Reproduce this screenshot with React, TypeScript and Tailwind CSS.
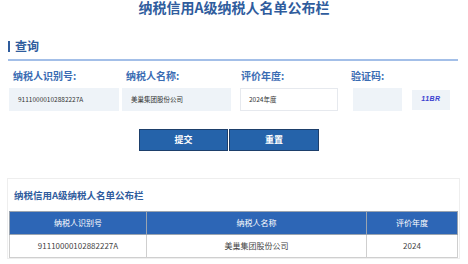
const font = { fontFamily: '"Noto Sans CJK SC", "Liberation Sans", sans-serif' };

function Field({
  label,
  value,
  className,
  labelClass,
  boxClass,
}: {
  label: string;
  value: string;
  className: string;
  labelClass: string;
  boxClass: string;
}) {
  return (
    <div className={`flex flex-col ${className}`}>
      <div className={`h-[12px] text-[10px] leading-[12px] font-bold text-[#3a6cb3] ${labelClass}`}>{label}</div>
      <div className={`mt-[6px] h-[23px] flex items-center text-[6.5px] text-[#333] ${boxClass}`}>{value}</div>
    </div>
  );
}

export default function App() {
  return (
    <div className="w-[468px] h-[264px] overflow-hidden bg-white" style={font}>
      {/* page title */}
      <div className="h-[14px] text-center text-[14px] leading-[14px] font-bold text-[#2f5c9d]">
        纳税信用A级纳税人名单公布栏
      </div>

      {/* query section header */}
      <div className="mt-[24px] ml-[8px] w-[450px] h-[23px] flex items-start border-b-2 border-[#a3bfe8]">
        <div className="mt-[3px] w-[2px] h-[11px] bg-[#2f5c9d]" />
        <div className="ml-[5px] text-[12px] leading-[16px] font-bold text-[#2f5c9d]">查询</div>
      </div>

      {/* form row */}
      <div className="mt-[9px] flex">
        <Field
          label="纳税人识别号:"
          value="91110000102882227A"
          className="ml-[9px] w-[110px]"
          labelClass="pl-[4px]"
          boxClass="bg-[#eef3f8] pl-[9px]"
        />
        <Field
          label="纳税人名称:"
          value="美巢集团股份公司"
          className="ml-[3px] w-[109px]"
          labelClass="pl-[4px]"
          boxClass="bg-[#eef3f8] pl-[9px]"
        />
        <Field
          label="评价年度:"
          value="2024年度"
          className="ml-[9px] w-[98px]"
          labelClass="pl-[1px]"
          boxClass="bg-white border border-[#e6e9ee] pl-[8px]"
        />
        <div className="ml-[15px] flex flex-col">
          <div className="-ml-[2px] h-[12px] text-[10px] leading-[12px] font-bold text-[#3a6cb3]">验证码:</div>
          <div className="mt-[6px] flex items-center">
            <div className="w-[49px] h-[23px] bg-[#eef3f8]" />
            <div className="ml-[10px] w-[38px] h-[20px] bg-[#eef3f8] flex items-center justify-center text-[7px] italic font-bold text-[#3b3fd0] tracking-[0.5px]" style={{ fontFamily: '"Liberation Sans", sans-serif' }}>
              11BR
            </div>
          </div>
        </div>
      </div>

      {/* buttons */}
      <div className="mt-[18px] ml-[139px] flex gap-[1px]">
        <button className="w-[89px] h-[22px] bg-[#2563aa] border border-[#1d3f6b] text-white text-[9px] font-bold">提交</button>
        <button className="w-[90px] h-[22px] bg-[#2563aa] border border-[#1d3f6b] text-white text-[9px] font-bold">重置</button>
      </div>

      {/* result card */}
      <div className="mt-[27px] ml-[7px] w-[453px] border border-[#eeeeee] bg-white px-[1px]">
        <div className="h-[32px] flex items-center pl-[5px] text-[9.5px] font-bold text-[#2f5c9d]">
          纳税信用A级纳税人名单公布栏
        </div>
        <table className="w-[449px] border-collapse text-[8px]">
          <thead>
            <tr className="h-[23px] bg-[#2d66b6] text-white">
              <th className="w-[137px] font-normal border border-[#9aa4b0]">纳税人识别号</th>
              <th className="w-[220px] font-normal border border-[#9aa4b0]">纳税人名称</th>
              <th className="font-normal border border-[#9aa4b0]">评价年度</th>
            </tr>
          </thead>
          <tbody>
            <tr className="h-[23px] text-[#444]">
              <td className="text-center border border-[#cfcfcf]">91110000102882227A</td>
              <td className="text-center border border-[#cfcfcf]">美巢集团股份公司</td>
              <td className="text-center border border-[#cfcfcf]">2024</td>
            </tr>
          </tbody>
        </table>
      </div>
    </div>
  );
}
